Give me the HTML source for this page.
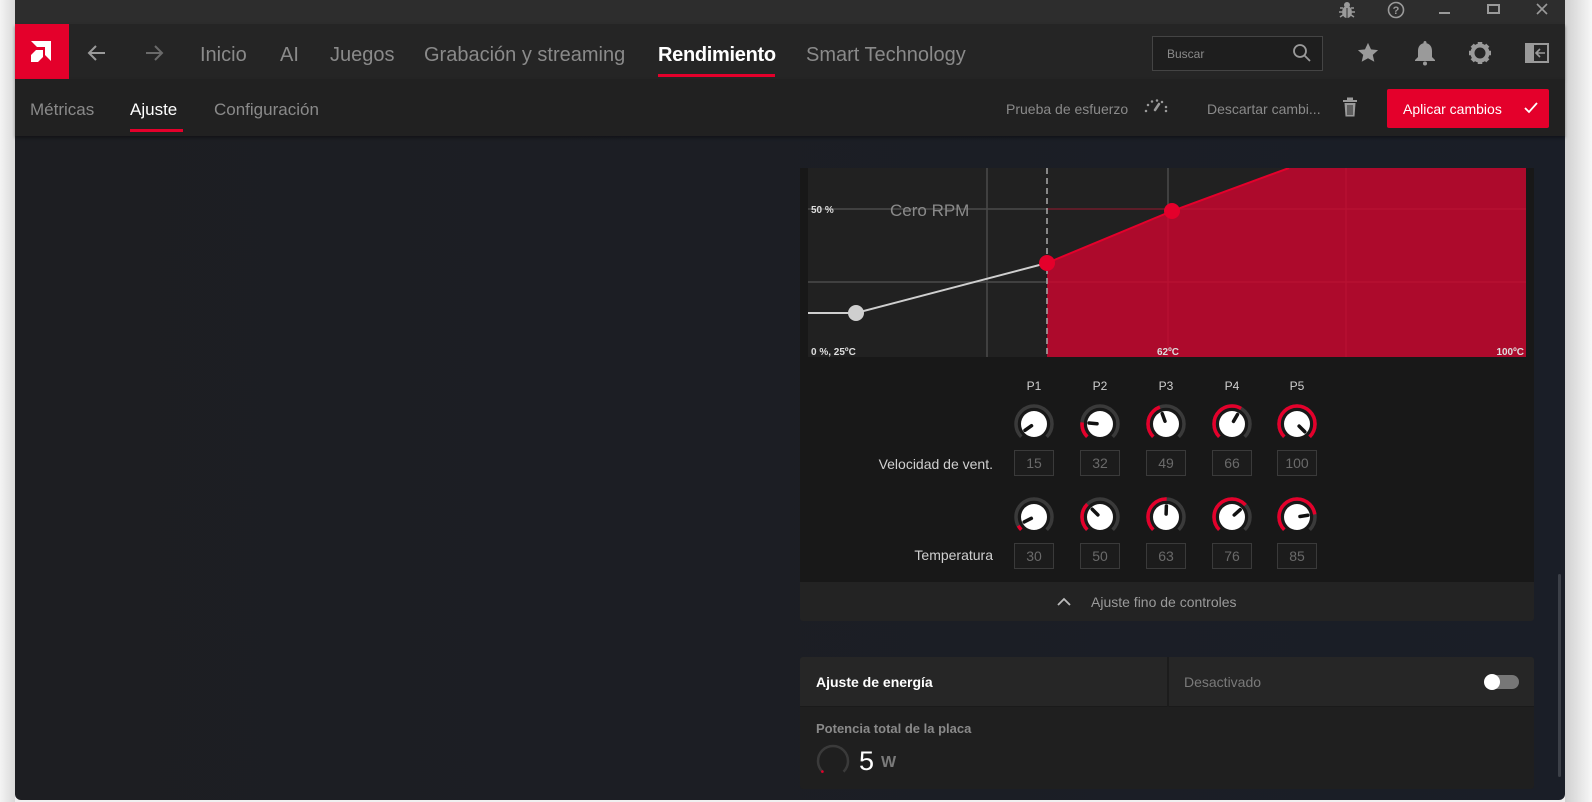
<!DOCTYPE html>
<html><head><meta charset="utf-8"><style>
*{margin:0;padding:0;box-sizing:border-box}
body{width:1592px;height:802px;background:#f0f0f0;font-family:"Liberation Sans",sans-serif;position:relative;overflow:hidden}
.a{position:absolute;white-space:nowrap}
#win{position:absolute;left:15px;top:0;width:1550px;height:800px;background:linear-gradient(90deg,#1d1e22,#1a1e27);border-radius:0 0 6px 6px;overflow:hidden}
.t{color:#8a8a8a}
.box{position:absolute;width:40px;height:26px;border:1px solid #3a3a3a;background:#1c1c1c;color:#6a6a6a;font-size:14px;text-align:center;line-height:24px}
.pl{position:absolute;color:#cfcfcf;font-size:12px;width:40px;text-align:center}
</style></head><body>
<div style="position:absolute;left:0;top:0;width:15px;height:802px;background:linear-gradient(90deg,#f4f4f4,#d9d9d9)"></div>
<div style="position:absolute;left:1565px;top:0;width:27px;height:802px;background:linear-gradient(90deg,#d0d0d0,#f7f7f7)"></div>
<div id="win"></div>
<!-- title bar -->
<div class="a" style="left:15px;top:0;width:1550px;height:24px;background:#2d2d2d"></div>
<svg class="a" style="left:1338px;top:1px" width="18" height="18" viewBox="0 0 18 18" fill="#9a9a9a"><ellipse cx="9" cy="11" rx="5" ry="6"/><circle cx="9" cy="4" r="3"/><path d="M2 7h3M13 7h3M1 11h3M14 11h3M2 16l3-2M16 16l-3-2" stroke="#9a9a9a" stroke-width="1.5"/><path d="M9 7v10" stroke="#2d2d2d" stroke-width="1"/></svg>
<svg class="a" style="left:1387px;top:1px" width="18" height="18" viewBox="0 0 18 18"><circle cx="9" cy="9" r="7.5" fill="none" stroke="#9a9a9a" stroke-width="1.6"/><text x="9" y="13" font-size="11" font-weight="bold" fill="#9a9a9a" text-anchor="middle" font-family="Liberation Sans">?</text></svg>
<div class="a" style="left:1439px;top:12px;width:11px;height:2px;background:#9a9a9a"></div>
<div class="a" style="left:1487px;top:4px;width:13px;height:10px;border:2px solid #9a9a9a"></div>
<svg class="a" style="left:1536px;top:3px" width="12" height="12"><path d="M1 1L11 11M11 1L1 11" stroke="#9a9a9a" stroke-width="1.6"/></svg>
<!-- nav -->
<div class="a" style="left:15px;top:24px;width:1550px;height:55px;background:#252525;box-shadow:0 2px 3px rgba(0,0,0,.4)"></div>
<div class="a" style="left:15px;top:24px;width:54px;height:55px;background:#e4002b"></div>
<svg class="a" style="left:29px;top:40px" width="26" height="24" viewBox="0 0 26 24" fill="#fff"><path d="M2 1h20v20l-6-6V7H8z"/><path d="M2 16l5-5h7v7l-5 5H2z" transform="translate(0,-1)"/></svg>
<svg class="a" style="left:87px;top:44px" width="20" height="18" viewBox="0 0 20 18"><path d="M18 9H3M9 2L2 9l7 7" fill="none" stroke="#9a9a9a" stroke-width="2"/></svg>
<svg class="a" style="left:144px;top:44px" width="20" height="18" viewBox="0 0 20 18"><path d="M2 9h15M11 2l7 7-7 7" fill="none" stroke="#6a6a6a" stroke-width="2"/></svg>
<div class="a t" style="left:200px;top:44px;font-size:20px">Inicio</div>
<div class="a t" style="left:280px;top:44px;font-size:20px">AI</div>
<div class="a t" style="left:330px;top:44px;font-size:20px">Juegos</div>
<div class="a t" style="left:424px;top:44px;font-size:20px">Grabación y streaming</div>
<div class="a" style="left:658px;top:44px;font-size:20px;color:#fff;font-weight:bold;letter-spacing:-.3px">Rendimiento</div>
<div class="a" style="left:658px;top:74px;width:117px;height:3px;background:#e4002b"></div>
<div class="a t" style="left:806px;top:44px;font-size:20px">Smart Technology</div>
<div class="a" style="left:1152px;top:36px;width:171px;height:35px;border:1px solid #444;background:#1e1e1e"></div>
<div class="a" style="left:1167px;top:47px;font-size:12px;color:#8a8a8a">Buscar</div>
<svg class="a" style="left:1292px;top:43px" width="20" height="20"><circle cx="8" cy="8" r="6" fill="none" stroke="#9a9a9a" stroke-width="1.8"/><path d="M12.5 12.5L18 18" stroke="#9a9a9a" stroke-width="1.8"/></svg>
<svg class="a" style="left:1357px;top:42px" width="22" height="22" viewBox="0 0 24 24" fill="#9a9a9a"><path d="M12 1l3.3 7 7.7.8-5.8 5.2 1.7 7.6L12 17.7 5.1 21.6l1.7-7.6L1 8.8 8.7 8z"/></svg>
<svg class="a" style="left:1413px;top:40px" width="24" height="26" viewBox="0 0 24 26" fill="#9a9a9a"><path d="M12 1c-1 0-1.5.7-1.5 1.5v.7C6.8 4 5 7 5 11v6l-3 3v1h20v-1l-3-3v-6c0-4-1.8-7-5.5-7.8v-.7C13.5 1.7 13 1 12 1z"/><circle cx="12" cy="23.5" r="2"/></svg>
<svg class="a" style="left:1468px;top:41px" width="24" height="24" viewBox="0 0 24 24"><circle cx="12" cy="12" r="7.5" fill="none" stroke="#9a9a9a" stroke-width="4"/><g stroke="#9a9a9a" stroke-width="4.5"><path d="M12 1v5M12 18v5M1 12h5M18 12h5M4.2 4.2l3.5 3.5M16.3 16.3l3.5 3.5M4.2 19.8l3.5-3.5M16.3 7.7l3.5-3.5"/></g></svg>
<svg class="a" style="left:1525px;top:43px" width="24" height="20" viewBox="0 0 24 20"><rect x="1" y="1" width="22" height="18" fill="none" stroke="#9a9a9a" stroke-width="2"/><rect x="1" y="1" width="8" height="18" fill="#9a9a9a"/><path d="M20 10h-8M15 6l-4 4 4 4" fill="none" stroke="#9a9a9a" stroke-width="1.6"/></svg>
<!-- subnav -->
<div class="a" style="left:15px;top:79px;width:1550px;height:57px;background:#212121;box-shadow:0 2px 3px rgba(0,0,0,.35)"></div>
<div class="a t" style="left:30px;top:100px;font-size:17px">Métricas</div>
<div class="a" style="left:130px;top:100px;font-size:17px;color:#fff">Ajuste</div>
<div class="a" style="left:130px;top:129px;width:53px;height:3px;background:#e4002b"></div>
<div class="a t" style="left:214px;top:100px;font-size:17px">Configuración</div>
<div class="a t" style="left:1006px;top:101px;font-size:14px">Prueba de esfuerzo</div>
<svg class="a" style="left:1143px;top:98px" width="26" height="16" viewBox="0 0 26 16" stroke="#9a9a9a" stroke-width="2.5" stroke-linecap="round"><path d="M3 13l0 0M5 7l0 0M9 3.5l0 0M14 2.5l0 0M19 4l0 0M23 9l0 0M23 13l0 0M12 12l4-6"/></svg>
<div class="a t" style="left:1207px;top:101px;font-size:14px">Descartar cambi...</div>
<svg class="a" style="left:1342px;top:97px" width="16" height="20" viewBox="0 0 16 20" fill="#9a9a9a"><rect x="1" y="3" width="14" height="2"/><rect x="5" y="0.5" width="6" height="2.5"/><path d="M2.5 6h11l-1 13.5h-9z"/><path d="M6 8v10M8 8v10M10 8v10" stroke="#212121" stroke-width="1"/></svg>
<div class="a" style="left:1387px;top:89px;width:162px;height:39px;background:#e4002b;border-radius:2px"></div>
<div class="a" style="left:1403px;top:101px;font-size:14px;color:#fff">Aplicar cambios</div>
<svg class="a" style="left:1524px;top:102px" width="14" height="12"><path d="M1 6l4 4 8-9" fill="none" stroke="#fff" stroke-width="1.8"/></svg>
<!-- fan card -->
<div class="a" style="left:800px;top:168px;width:734px;height:414px;background:#181818"></div>
<svg class="a" style="left:808px;top:168px" width="718" height="189" viewBox="808 168 718 189">
<rect x="808" y="168" width="718" height="189" fill="#212121"/>
<path d="M1047 263L1172 211L1289 168H1526V357H1047Z" fill="#ad0a2c"/>
<g stroke="#4a4a4a" stroke-width="1.5"><path d="M808 209H1047M808 282H1047M987 168V357"/></g>
<g stroke="#c01837" stroke-width="1.2" opacity=".6"><path d="M1047 209H1526M1047 282H1526M1168 211V357M1346 168V357"/></g>
<path d="M1168 168V211" stroke="#4a4a4a" stroke-width="1.5"/>
<path d="M1047 168V357" stroke="#aaa" stroke-width="1.5" stroke-dasharray="6 4"/>
<path d="M808 313H856L1047 263" fill="none" stroke="#cfcfcf" stroke-width="2"/>
<path d="M1047 263L1172 211L1289 168" fill="none" stroke="#e4002b" stroke-width="2"/>
<circle cx="856" cy="313" r="8" fill="#cfcfcf"/>
<circle cx="1047" cy="263" r="8" fill="#e4002b"/>
<circle cx="1172" cy="211" r="8" fill="#e4002b"/>
<text x="811" y="213" font-size="10" font-weight="bold" fill="#ddd" font-family="Liberation Sans">50 %</text>
<text x="890" y="216" font-size="17" fill="#8a8a8a" font-family="Liberation Sans">Cero RPM</text>
<text x="811" y="355" font-size="10" font-weight="bold" fill="#ddd" font-family="Liberation Sans">0 %, 25ºC</text>
<text x="1168" y="355" font-size="10" font-weight="bold" fill="#ddd" text-anchor="middle" font-family="Liberation Sans">62ºC</text>
<text x="1524" y="355" font-size="10" font-weight="bold" fill="#ddd" text-anchor="end" font-family="Liberation Sans">100ºC</text>
</svg>
<div class="pl" style="left:1014px;top:379px">P1</div>
<div class="pl" style="left:1080px;top:379px">P2</div>
<div class="pl" style="left:1146px;top:379px">P3</div>
<div class="pl" style="left:1212px;top:379px">P4</div>
<div class="pl" style="left:1277px;top:379px">P5</div>
<svg class="a" style="left:1000px;top:402px" width="320" height="140" viewBox="0 0 320 140">
<defs><g id="k"><circle r="18" fill="none" stroke="#3a3a3a" stroke-width="3.5" stroke-dasharray="84.8 113.1" transform="rotate(135)"/><circle r="13" fill="#fff"/></g></defs>
<g transform="translate(34,22)"><use href="#k"/><line x1="0" y1="-3" x2="0" y2="-11" stroke="#111" stroke-width="3.5" stroke-linecap="round" transform="rotate(-125)"/></g>
<g transform="translate(100,22)"><use href="#k"/><circle r="18" fill="none" stroke="#e4002b" stroke-width="3.5" stroke-dasharray="15.7 113.1" transform="rotate(135)"/><line x1="0" y1="-3" x2="0" y2="-11" stroke="#111" stroke-width="3.5" stroke-linecap="round" transform="rotate(-85)"/></g>
<g transform="translate(166,22)"><use href="#k"/><circle r="18" fill="none" stroke="#e4002b" stroke-width="3.5" stroke-dasharray="36.1 113.1" transform="rotate(135)"/><line x1="0" y1="-3" x2="0" y2="-11" stroke="#111" stroke-width="3.5" stroke-linecap="round" transform="rotate(-20)"/></g>
<g transform="translate(232,22)"><use href="#k"/><circle r="18" fill="none" stroke="#e4002b" stroke-width="3.5" stroke-dasharray="51.8 113.1" transform="rotate(135)"/><line x1="0" y1="-3" x2="0" y2="-11" stroke="#111" stroke-width="3.5" stroke-linecap="round" transform="rotate(30)"/></g>
<g transform="translate(297,22)"><use href="#k"/><circle r="18" fill="none" stroke="#e4002b" stroke-width="3.5" stroke-dasharray="84.8 113.1" transform="rotate(135)"/><line x1="0" y1="-3" x2="0" y2="-11" stroke="#111" stroke-width="3.5" stroke-linecap="round" transform="rotate(135)"/></g>
<g transform="translate(34,115)"><use href="#k"/><circle r="18" fill="none" stroke="#e4002b" stroke-width="3.5" stroke-dasharray="5 113.1" transform="rotate(135)"/><line x1="0" y1="-3" x2="0" y2="-11" stroke="#111" stroke-width="3.5" stroke-linecap="round" transform="rotate(-117)"/></g>
<g transform="translate(100,115)"><use href="#k"/><circle r="18" fill="none" stroke="#e4002b" stroke-width="3.5" stroke-dasharray="28.3 113.1" transform="rotate(135)"/><line x1="0" y1="-3" x2="0" y2="-11" stroke="#111" stroke-width="3.5" stroke-linecap="round" transform="rotate(-45)"/></g>
<g transform="translate(166,115)"><use href="#k"/><circle r="18" fill="none" stroke="#e4002b" stroke-width="3.5" stroke-dasharray="43 113.1" transform="rotate(135)"/><line x1="0" y1="-3" x2="0" y2="-11" stroke="#111" stroke-width="3.5" stroke-linecap="round" transform="rotate(2)"/></g>
<g transform="translate(232,115)"><use href="#k"/><circle r="18" fill="none" stroke="#e4002b" stroke-width="3.5" stroke-dasharray="57.5 113.1" transform="rotate(135)"/><line x1="0" y1="-3" x2="0" y2="-11" stroke="#111" stroke-width="3.5" stroke-linecap="round" transform="rotate(48)"/></g>
<g transform="translate(297,115)"><use href="#k"/><circle r="18" fill="none" stroke="#e4002b" stroke-width="3.5" stroke-dasharray="67.9 113.1" transform="rotate(135)"/><line x1="0" y1="-3" x2="0" y2="-11" stroke="#111" stroke-width="3.5" stroke-linecap="round" transform="rotate(81)"/></g>
</svg>
<div class="a" style="left:800px;top:456px;width:193px;text-align:right;font-size:14px;color:#d0d0d0">Velocidad de vent.</div>
<div class="box" style="left:1014px;top:450px">15</div>
<div class="box" style="left:1080px;top:450px">32</div>
<div class="box" style="left:1146px;top:450px">49</div>
<div class="box" style="left:1212px;top:450px">66</div>
<div class="box" style="left:1277px;top:450px">100</div>
<div class="a" style="left:800px;top:547px;width:193px;text-align:right;font-size:14px;color:#d0d0d0">Temperatura</div>
<div class="box" style="left:1014px;top:543px">30</div>
<div class="box" style="left:1080px;top:543px">50</div>
<div class="box" style="left:1146px;top:543px">63</div>
<div class="box" style="left:1212px;top:543px">76</div>
<div class="box" style="left:1277px;top:543px">85</div>
<div class="a" style="left:800px;top:582px;width:734px;height:39px;background:#232323;border-radius:0 0 3px 3px"></div>
<svg class="a" style="left:1057px;top:597px" width="14" height="9"><path d="M1 8l6-6 6 6" fill="none" stroke="#bbb" stroke-width="1.8"/></svg>
<div class="a" style="left:1091px;top:594px;font-size:14px;color:#9a9a9a">Ajuste fino de controles</div>
<!-- energy card -->
<div class="a" style="left:800px;top:657px;width:734px;height:132px;background:#1f1f1f;border-radius:3px"></div>
<div class="a" style="left:800px;top:657px;width:734px;height:50px;background:#262626;border-bottom:1px solid #1a1a1a;border-radius:3px 3px 0 0"></div>
<div class="a" style="left:1167px;top:657px;width:2px;height:50px;background:#1c1c1c"></div>
<div class="a" style="left:816px;top:674px;font-size:14px;font-weight:bold;color:#fff">Ajuste de energía</div>
<div class="a" style="left:1184px;top:674px;font-size:14px;color:#7a7a7a">Desactivado</div>
<div class="a" style="left:1487px;top:675px;width:32px;height:14px;border-radius:7px;background:#777"></div>
<div class="a" style="left:1484px;top:674px;width:16px;height:16px;border-radius:8px;background:#fff"></div>
<div class="a" style="left:816px;top:721px;font-size:13px;font-weight:bold;color:#8a8a8a">Potencia total de la placa</div>
<svg class="a" style="left:815px;top:743px" width="36" height="36"><circle cx="18" cy="18" r="15" fill="none" stroke="#3a3a3a" stroke-width="2.5" stroke-dasharray="70.7 94.2" transform="rotate(135 18 18)"/><circle cx="7.4" cy="28.6" r="1.3" fill="#e4002b"/></svg>
<div class="a" style="left:859px;top:746px;font-size:27px;color:#fff">5</div>
<div class="a" style="left:881px;top:754px;font-size:16px;font-weight:bold;color:#7a7a7a">W</div>
<div class="a" style="left:1558px;top:574px;width:3px;height:203px;background:#3c4048;border-radius:2px"></div>
</body></html>
